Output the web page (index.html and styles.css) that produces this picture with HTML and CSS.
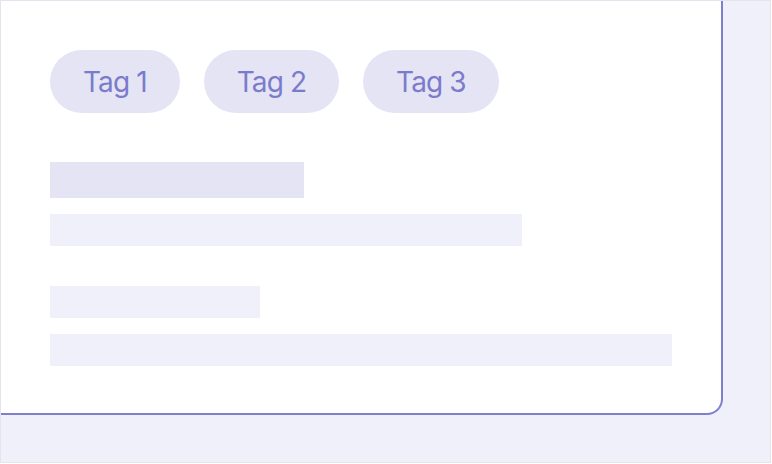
FILE: index.html
```html
<!DOCTYPE html>
<html>
<head>
<meta charset="utf-8">
<link rel="stylesheet" href="styles.css">
</head>
<body>
<div class="frame">
  <div class="card">
    <div class="tags">
      <span class="tag">Tag 1</span>
      <span class="tag">Tag 2</span>
      <span class="tag">Tag 3</span>
    </div>
    <div class="lines">
      <div class="group">
        <div class="bar bar-title w1"></div>
        <div class="bar w2"></div>
      </div>
      <div class="group">
        <div class="bar w3"></div>
        <div class="bar w4"></div>
      </div>
    </div>
  </div>
</div>
</body>
</html>
```

FILE: styles.css
```css
html, body {
  margin: 0;
  padding: 0;
  background: #ffffff;
}
.frame {
  box-sizing: border-box;
  width: 771px;
  height: 463px;
  border: 1px solid #e4e4ee;
  background: #f0f0fa;
}
.card {
  box-sizing: border-box;
  width: 722px;
  height: 414px;
  background: #ffffff;
  border-right: 2px solid #7f7fd0;
  border-bottom: 2px solid #7f7fd0;
  border-bottom-right-radius: 16px;
  padding: 49px 0 0 49px;
}
.tags {
  display: flex;
  gap: 24px;
}
.tag {
  box-sizing: border-box;
  height: 63px;
  padding: 0 33px;
  border-radius: 32px;
  background: #e4e4f4;
  color: #7b7bcc;
  font-family: Inter, "Noto Sans", sans-serif;
  font-size: 28px;
  letter-spacing: -0.9px;
  display: flex;
  align-items: center;
}
.lines {
  margin-top: 49px;
  display: flex;
  flex-direction: column;
  gap: 40px;
}
.group {
  display: flex;
  flex-direction: column;
  gap: 16px;
}
.bar {
  height: 32px;
  background: #f0f0fa;
}
.bar-title {
  height: 36px;
  background: #e4e4f4;
}
.w1 { width: 254px; }
.w2 { width: 472px; }
.w3 { width: 210px; }
.w4 { width: 622px; }
```
